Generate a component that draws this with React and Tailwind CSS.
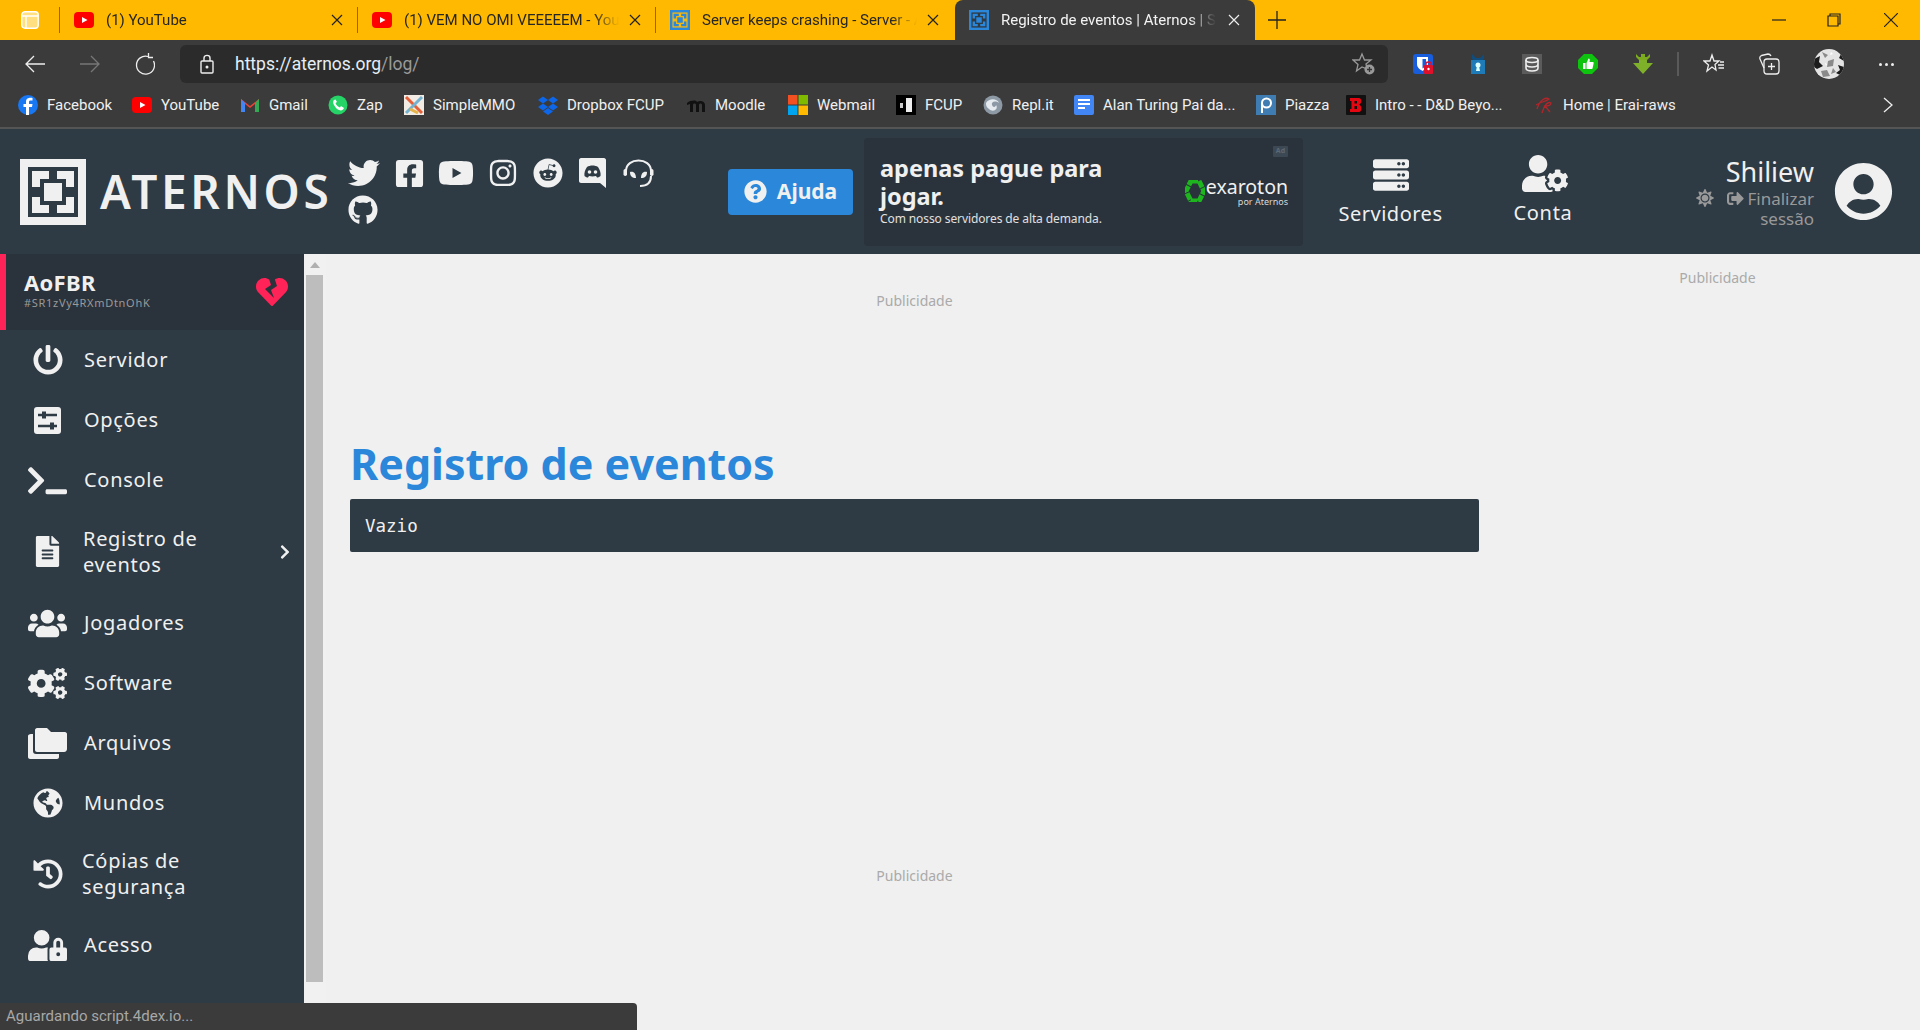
import React from "react";
import {
  FaTwitter, FaFacebookSquare, FaYoutube, FaInstagram, FaReddit, FaGithub, FaQuestionCircle,
  FaServer, FaUserCog, FaSun, FaSignOutAlt, FaUserCircle, FaHeartBroken, FaPowerOff, FaTerminal,
  FaFileAlt, FaChevronRight, FaUsers, FaCogs, FaGlobeAmericas, FaHistory, FaUserLock,
} from "react-icons/fa";

const ui = "font-['Roboto',sans-serif]";
const site = "font-['Noto_Sans',sans-serif]";

function AternosLogo({ size = 66, light = "#f0f0f0", dark = "#2e3a44" }) {
  return (
    <svg width={size} height={size} viewBox="0 0 66 66" className="shrink-0">
      <rect width="66" height="66" fill={light} />
      <rect x="8" y="8" width="50" height="50" fill={dark} />
      <rect x="24" y="24" width="18" height="18" fill={light} />
      <polygon points="12,12 29,12 29,20 20,20 20,28 12,28" fill={light} />
      <polygon points="54,12 37,12 37,20 46,20 46,28 54,28" fill={light} />
      <polygon points="12,54 29,54 29,46 20,46 20,38 12,38" fill={light} />
      <polygon points="54,54 37,54 37,46 46,46 46,38 54,38" fill={light} />
    </svg>
  );
}

function AFav() {
  return (
    <svg width="20" height="20" viewBox="0 0 66 66" className="shrink-0">
      <rect width="66" height="66" fill="#2b87da" />
      <rect x="8" y="8" width="50" height="50" fill="#f5b80e" />
      <rect x="24" y="24" width="18" height="18" fill="#2b87da" />
      <polygon points="12,12 29,12 29,20 20,20 20,28 12,28" fill="#2b87da" />
      <polygon points="54,12 37,12 37,20 46,20 46,28 54,28" fill="#2b87da" />
      <polygon points="12,54 29,54 29,46 20,46 20,38 12,38" fill="#2b87da" />
      <polygon points="54,54 37,54 37,46 46,46 46,38 54,38" fill="#2b87da" />
    </svg>
  );
}

function AFavDark() {
  return (
    <svg width="20" height="20" viewBox="0 0 66 66" className="shrink-0">
      <rect width="66" height="66" fill="#2b87da" />
      <rect x="8" y="8" width="50" height="50" fill="#2e3a44" />
      <rect x="24" y="24" width="18" height="18" fill="#2b87da" />
      <polygon points="12,12 29,12 29,20 20,20 20,28 12,28" fill="#2b87da" />
      <polygon points="54,12 37,12 37,20 46,20 46,28 54,28" fill="#2b87da" />
      <polygon points="12,54 29,54 29,46 20,46 20,38 12,38" fill="#2b87da" />
      <polygon points="54,54 37,54 37,46 46,46 46,38 54,38" fill="#2b87da" />
    </svg>
  );
}

function YtFav() {
  return (
    <svg width="20" height="20" viewBox="0 0 20 20" className="shrink-0">
      <rect y="2" width="20" height="16" rx="4" fill="#f00" />
      <polygon points="8,7 8,13 13.5,10" fill="#fff" />
    </svg>
  );
}

function X({ color = "#222" }) {
  return (
    <svg width="12" height="12" viewBox="0 0 12 12" className="shrink-0">
      <path d="M1 1L11 11M11 1L1 11" stroke={color} strokeWidth="1.2" />
    </svg>
  );
}

function Tab({ icon, text }) {
  return (
    <div className="flex h-full w-[299px] shrink-0 items-center pl-[14px] border-l border-[#8a6c10] -mr-px box-border">
      {icon}
      <span className="ml-[12px] w-[215px] overflow-hidden whitespace-nowrap text-[15px] text-[#262626] [mask-image:linear-gradient(to_right,black_88%,transparent)]">{text}</span>
      <span className="ml-[10px]"><X /></span>
    </div>
  );
}

function TabBar() {
  return (
    <div className={`flex h-[40px] shrink-0 bg-[#ffb900] ${ui}`}>
      <div className="flex w-[59px] shrink-0 items-center justify-center">
        <svg width="18" height="18" viewBox="0 0 18 18">
          <rect x="0.8" y="0.8" width="16.4" height="16.4" rx="3" fill="#ffdf80" stroke="#fff" strokeWidth="1.4" />
          <path d="M1 5H17M5 5V17" stroke="#fff" strokeWidth="1.4" />
        </svg>
      </div>
      <div className="flex h-full w-[896px] items-center py-[7px]">
        <Tab icon={<YtFav />} text="(1) YouTube" />
        <Tab icon={<YtFav />} text="(1) VEM NO OMI VEEEEEM - YouTube" />
        <Tab icon={<AFav />} text="Server keeps crashing - Server - Aternos" />
      </div>
      <div className="flex h-[45px] w-[300px] shrink-0 items-center rounded-t-lg bg-[#3b3b3b] pb-[5px] pl-[14px]">
        <AFavDark />
        <span className="ml-[12px] w-[215px] overflow-hidden whitespace-nowrap text-[15px] text-[#f2f2f2] [mask-image:linear-gradient(to_right,black_88%,transparent)]">Registro de eventos | Aternos | Server</span>
        <span className="ml-[12px]"><X color="#eee" /></span>
      </div>
      <div className="ml-[13px] flex items-center">
        <svg width="18" height="18" viewBox="0 0 18 18"><path d="M9 0V18M0 9H18" stroke="#222" strokeWidth="1.3" /></svg>
      </div>
      <div className="ml-auto flex items-center text-[#222]">
        <svg width="14" height="14" viewBox="0 0 14 14"><path d="M0 7H14" stroke="#222" strokeWidth="1.2" /></svg>
        <svg className="ml-[41px]" width="14" height="14" viewBox="0 0 14 14" fill="none"><path d="M3 3V1H13V11H11M1 3H11V13H1Z" stroke="#222" strokeWidth="1.2" /></svg>
        <svg className="ml-[43px] mr-[22px]" width="14" height="14" viewBox="0 0 14 14"><path d="M0 0L14 14M14 0L0 14" stroke="#222" strokeWidth="1.2" /></svg>
      </div>
    </div>
  );
}

function ExtIcons() {
  return (
    <div className="ml-[25px] flex items-center">
      <svg width="20" height="20" viewBox="0 0 20 20" className="mr-[35px]">
        <rect width="20" height="20" rx="3" fill="#175ddc" />
        <path d="M4 3H15V10C15 14 11 16 9.5 17C8 16 4 14 4 10Z" fill="#fff" />
        <path d="M9.5 5H13V10C13 12 11 13.5 9.5 14.5Z" fill="#175ddc" />
        <rect x="11" y="11" width="9" height="9" rx="1" fill="#e0102a" />
        <path d="M13 11V9.5C13 7.5 18 7.5 18 9.5V11" stroke="#e0102a" fill="none" strokeWidth="1.4" />
        <circle cx="15.5" cy="15" r="1.2" fill="#fff" />
      </svg>
      <svg width="20" height="20" viewBox="0 0 20 20" className="mr-[34px]">
        <path d="M4 0L8 4H12L16 0V5L14 7H6L4 5Z" fill="#0e4d7d" />
        <rect x="3" y="6" width="14" height="14" fill="#1f7ab8" />
        <circle cx="10" cy="11" r="2.5" fill="#dff" />
        <path d="M9 12H11L12 17H8Z" fill="#dff" />
      </svg>
      <svg width="20" height="20" viewBox="0 0 20 20" className="mr-[36px]">
        <rect width="20" height="20" fill="#5b5b5b" />
        <g fill="none" stroke="#eee" strokeWidth="1.6">
          <ellipse cx="10" cy="6" rx="6" ry="2.5" />
          <path d="M4 6V14C4 16 7 17 10 17S16 16 16 14V6M4 10C4 12 7 13 10 13S16 12 16 10" />
        </g>
      </svg>
      <svg width="20" height="20" viewBox="0 0 20 20" className="mr-[35px]">
        <polygon points="6,0 14,0 20,6 20,14 14,20 6,20 0,14 0,6" fill="#0fc40f" />
        <path d="M5 9H7.5V15H5ZM8.5 9L10.5 4.5C12 4.5 12 6 11.5 8H15C15.8 8 15.8 9 15.5 10L14.5 14.5C14.3 15 14 15 13.5 15H8.5Z" fill="#fff" />
      </svg>
      <svg width="20" height="20" viewBox="0 0 20 20" className="mr-[24px]">
        <path d="M3 0L6 3H8V0H12V3H14L17 0V3L14 6H6L3 3Z" fill="#7cab20" />
        <path d="M6 6H14V9H20L10 20L0 9H6Z" fill="#7fb02a" />
      </svg>
      <div className="mr-[24px] h-[24px] w-[2px] bg-[#5a5a5a]" />
      <svg width="22" height="22" viewBox="0 0 22 22" fill="none" stroke="#eee" strokeWidth="1.3" className="mr-[33px]">
        <path d="M9 2L11 8H16L12 11.5L13 17L9 14L4 18L5.5 12L1 8H7Z" />
        <path d="M15 12H21M15.5 15H21M17 9H21" />
      </svg>
      <svg width="22" height="22" viewBox="0 0 22 22" fill="none" stroke="#eee" strokeWidth="1.3" className="mr-[34px]">
        <rect x="6" y="6" width="15" height="15" rx="3" />
        <path d="M13.5 10V17M10 13.5H17M6 15L2 6C1.5 4.5 2 3 3.5 2.5L10 1C11.5 1 12.5 2 13 3" />
      </svg>
      <svg width="30" height="30" viewBox="0 0 30 30" className="mr-[35px] shrink-0">
        <defs><clipPath id="av"><circle cx="15" cy="15" r="15" /></clipPath></defs>
        <g clipPath="url(#av)">
          <rect width="30" height="30" fill="#e4e4e4" />
          <path d="M20 0H30V12L25 9L27 5ZM0 10L6 7L5 13L9 17L3 20L0 18ZM24 16L30 18V28L22 24L26 21Z" fill="#1c1c1c" />
          <path d="M8 3L14 6L11 9ZM14 12L20 10L19 17L13 18ZM7 22L13 21L16 27L9 28ZM19 19L22 23L17 25Z" fill="#8a8a8a" />
          <path d="M11 14L13 15L12 17ZM3 24L6 26L4 28ZM17 3L19 5L16 6Z" fill="#fff" />
        </g>
      </svg>
      <div className="flex gap-[3px]">
        <span className="h-[3px] w-[3px] rounded-full bg-[#eee]" />
        <span className="h-[3px] w-[3px] rounded-full bg-[#eee]" />
        <span className="h-[3px] w-[3px] rounded-full bg-[#eee]" />
      </div>
    </div>
  );
}

function Toolbar() {
  return (
    <div className={`flex h-[43px] shrink-0 items-center bg-[#3b3b3b] pt-[5px] ${ui}`}>
      <svg className="ml-[25px]" width="20" height="18" viewBox="0 0 20 18" fill="none" stroke="#eee" strokeWidth="1.3"><path d="M20 9H1M9 1L1 9L9 17" /></svg>
      <svg className="ml-[35px]" width="20" height="18" viewBox="0 0 20 18" fill="none" stroke="#777" strokeWidth="1.3"><path d="M0 9H19M11 1L19 9L11 17" /></svg>
      <svg className="ml-[35px]" width="20" height="22" viewBox="0 0 20 22" fill="none" stroke="#eee" strokeWidth="1.3"><path d="M13 3.5A9 9 0 1 0 18.5 8M13.5 0V4.5H18" /></svg>
      <div className="ml-[25px] flex h-[38px] w-[1208px] shrink-0 items-center rounded-md bg-[#2b2b2b]">
        <svg className="ml-[20px]" width="14" height="20" viewBox="0 0 14 20" fill="none" stroke="#eee" strokeWidth="1.4"><rect x="1" y="7" width="12" height="12" rx="1" /><path d="M4 7V4C4 0.5 10 0.5 10 4V7" /><circle cx="7" cy="13" r="0.8" fill="#eee" /></svg>
        <span className="ml-[21px] text-[17.5px] text-[#e6eef5]">https://aternos.org<span className="text-[#9a9a9a]">/log/</span></span>
        <svg className="ml-auto mr-[12px]" width="24" height="24" viewBox="0 0 24 24" fill="none" stroke="#999" strokeWidth="1.3">
          <path d="M10 2L12.5 8H19L14 12L15 17L10 15L4.5 19L6 12.5L1 8H7.5Z" />
          <circle cx="17.5" cy="17.5" r="5" fill="#999" stroke="none" />
          <path d="M17.5 15V20M15 17.5H20" stroke="#333" strokeWidth="1.3" />
        </svg>
      </div>
      <ExtIcons />
    </div>
  );
}

const Sq = ({ children }) => (
  <svg width="20" height="20" viewBox="0 0 20 20" className="shrink-0">{children}</svg>
);

const bookmarks = [
  { w: "w-[114px]", t: "Facebook", i: <Sq><circle cx="10" cy="10" r="10" fill="#1877f2" /><path d="M11 20V12H14L14.5 9H11V7C11 6 11.5 5.5 12.5 5.5H14.5V3C13 2.8 8 2 8 7V9H5.5V12H8V20Z" fill="#fff" /></Sq> },
  { w: "w-[108px]", t: "YouTube", i: <YtFav /> },
  { w: "w-[88px]", t: "Gmail", i: <Sq><path d="M1 4L10 11L19 4V17H15V9L10 13L5 9V17H1Z" fill="#ea4335" /><path d="M1 4V17H5V8Z" fill="#4285f4" /><path d="M19 4V17H15V8Z" fill="#34a853" /></Sq> },
  { w: "w-[76px]", t: "Zap", i: <Sq><circle cx="10" cy="10" r="9.5" fill="#25d366" /><path d="M6 5C4 7 6 11 9 14C12 16 15 16 16 13L13 11L12 12.5C10 12 8 10 7.5 8L9 7L7.5 4.5Z" fill="#fff" /></Sq> },
  { w: "w-[134px]", t: "SimpleMMO", i: <Sq><rect width="20" height="20" fill="#f2ece4" /><path d="M2 2L18 18" stroke="#e3603a" strokeWidth="3" /><path d="M18 2L2 18" stroke="#75b2d0" strokeWidth="3" /><path d="M6 14L14 18" stroke="#e6b34a" strokeWidth="3" /></Sq> },
  { w: "w-[148px]", t: "Dropbox FCUP", i: <Sq><path d="M5 1.5L10 5L5 8.5L0 5ZM15 1.5L20 5L15 8.5L10 5ZM5 8.5L10 12L5 15.5L0 12ZM15 8.5L20 12L15 15.5L10 12ZM5 16.5L10 13L15 16.5L10 20Z" fill="#0e66e8" /></Sq> },
  { w: "w-[102px]", t: "Moodle", i: <Sq><path d="M1 8C5 5 10 5 11 7C14 5 19 6 19 10V17H16V10C16 8 13 8 13 10V17H10V10C10 8 7 8 7 10V17H4V9L1 10Z" fill="#111" /></Sq> },
  { w: "w-[108px]", t: "Webmail", i: <Sq><rect width="9.5" height="9.5" fill="#f25022" /><rect x="10.5" width="9.5" height="9.5" fill="#7fba00" /><rect y="10.5" width="9.5" height="9.5" fill="#00a4ef" /><rect x="10.5" y="10.5" width="9.5" height="9.5" fill="#ffb900" /></Sq> },
  { w: "w-[87px]", t: "FCUP", i: <Sq><rect width="20" height="20" fill="#000" /><rect x="10" y="3" width="6" height="14" fill="#eee" /><rect x="4" y="8" width="3" height="5" fill="#ccc" /></Sq> },
  { w: "w-[91px]", t: "Repl.it", i: <Sq><circle cx="10" cy="10" r="9.5" fill="#8d9aa6" /><path d="M3 8C6 3 14 3 16 8C12 5 8 7 9 10C10 13 13 12 13 10C16 14 10 18 6 14C3 12 3 10 3 8Z" fill="#e5ebef" /></Sq> },
  { w: "w-[182px]", t: "Alan Turing Pai da...", i: <Sq><rect width="20" height="20" rx="2" fill="#4285f4" /><path d="M4 5H16M4 9H16M4 13H11" stroke="#fff" strokeWidth="2" /></Sq> },
  { w: "w-[90px]", t: "Piazza", i: <Sq><rect width="20" height="20" fill="#3e7cb1" /><circle cx="10.5" cy="8" r="4.5" fill="none" stroke="#fff" strokeWidth="2" /><path d="M6 8V18" stroke="#fff" strokeWidth="2" /></Sq> },
  { w: "w-[188px]", t: "Intro - - D&D Beyo...", i: <Sq><rect width="20" height="20" rx="1" fill="#111" /><path d="M4 3H13C16 3 16 9 13 9.5C16 10 16 17 13 17H4V14H5.5V6H4ZM8.5 6V8.5H11V6ZM8.5 11V14H11V11Z" fill="#e40712" /></Sq> },
  { w: "w-[200px]", t: "Home | Erai-raws", i: <Sq><path d="M3 14C6 4 12 2 15 4C13 6 6 7 2 10M8 18C10 10 14 6 17 8C17 11 13 11 11 11L16 17" fill="none" stroke="#b2262b" strokeWidth="1.3" /></Sq> },
];

function Bookmarks() {
  return (
    <div className={`flex h-[46px] shrink-0 items-center border-b-2 border-[#555] bg-[#3b3b3b] pl-[18px] ${ui}`}>
      {bookmarks.map((b) => (
        <div key={b.t} className={`flex shrink-0 items-center gap-[9px] ${b.w}`}>
          {b.i}
          <span className="whitespace-nowrap text-[15px] text-[#f0f0f0]">{b.t}</span>
        </div>
      ))}
      <svg className="ml-[149px]" width="10" height="16" viewBox="0 0 10 16" fill="none" stroke="#eee" strokeWidth="1.3"><path d="M1 1L9 8L1 15" /></svg>
    </div>
  );
}

function Discord() {
  return (
    <svg width="27" height="30" viewBox="0 0 27 30">
      <path d="M2 0H25C26 0 27 1 27 2V30L21 25H2C1 25 0 24 0 23V2C0 1 1 0 2 0Z" fill="#f0f0f0" />
      <path d="M8 9C11 7 16 7 19 9C21 12 22 15 21.5 18C20 19 19 19.5 18 19.5L17 18C14.5 18.5 12.5 18.5 10 18L9 19.5C8 19.5 7 19 5.5 18C5 15 6 12 8 9Z" fill="#2e3a44" />
      <circle cx="10.5" cy="14" r="1.8" fill="#f0f0f0" />
      <circle cx="16.5" cy="14" r="1.8" fill="#f0f0f0" />
    </svg>
  );
}

function Headset() {
  return (
    <svg width="31" height="30" viewBox="0 0 31 30" fill="none">
      <path d="M3 13C3 -1 28 -1 28 13" stroke="#f0f0f0" strokeWidth="2" />
      <rect x="0.5" y="11" width="3.5" height="7" rx="1.7" fill="#f0f0f0" />
      <rect x="27" y="11" width="3.5" height="7" rx="1.7" fill="#f0f0f0" />
      <path d="M7 14C11 13 13 16 13 20C9 20 7 18 7 14ZM24 14C20 13 18 16 18 20C22 20 24 18 24 14Z" fill="#f0f0f0" />
      <path d="M28 18C28 25 24 28 17 28" stroke="#f0f0f0" strokeWidth="2" />
    </svg>
  );
}

function Socials() {
  return (
    <div className="ml-[18px] flex w-[320px] shrink-0 flex-col gap-[4px] self-start pt-[26px] text-[#f0f0f0]">
      <div className="flex items-center">
        <FaTwitter className="text-[32px]" />
        <FaFacebookSquare className="ml-[14px] text-[31px]" />
        <FaYoutube className="ml-[13px] text-[36px]" />
        <FaInstagram className="ml-[14px] text-[30px]" />
        <FaReddit className="ml-[15px] text-[30px]" />
        <span className="ml-[16px]"><Discord /></span>
        <span className="ml-[17px]"><Headset /></span>
      </div>
      <FaGithub className="text-[30px]" />
    </div>
  );
}

function Ad() {
  return (
    <div className="ml-[11px] flex h-[108px] w-[439px] shrink-0 items-center rounded-sm bg-[#2a333c] pl-[16px] pr-[15px]">
      <div className="-mt-[2px] w-[250px]">
        <div className="text-[23.5px] font-bold leading-[28px] text-[#f0f0f0]">apenas pague para jogar.</div>
        <div className="whitespace-nowrap text-[12px] leading-[17px] tracking-[-0.1px] text-[#e0e0e0]">Com nosso servidores de alta demanda.</div>
      </div>
      <div className="ml-auto flex h-full flex-col items-end pt-[8px]">
        <span className="flex h-[11px] w-[15px] items-center justify-center rounded-[1px] bg-[#3c4854] text-[7px] font-bold text-[#5d6975]">Ad</span>
        <div className="mt-[20px] flex items-center">
          <svg width="20" height="22" viewBox="0 0 20 22" className="mr-[1px]">
            <polygon points="6,1 14,1 19,11 14,21 6,21 1,11" fill="none" stroke="#1eb61e" strokeWidth="5" strokeDasharray="7 1" />
          </svg>
          <div className="flex flex-col items-end">
            <span className="text-[19.5px] leading-[20px] text-[#f0f0f0]">exaroton</span>
            <span className="text-[9px] leading-[9px] text-[#d8d8d8]">por Aternos</span>
          </div>
        </div>
      </div>
    </div>
  );
}

function Header() {
  return (
    <div className={`flex h-[125px] shrink-0 items-center bg-[#2e3a44] pl-[20px] ${site}`}>
      <AternosLogo />
      <span className="ml-[14px] -mt-[2px] w-[230px] shrink-0 whitespace-nowrap text-[46px] font-semibold leading-none tracking-[3.6px] text-[#f0f0f0]">ATERNOS</span>
      <Socials />
      <div className="ml-[60px] flex h-[46px] w-[125px] shrink-0 items-center justify-center gap-[10px] rounded-sm bg-[#2b87da] text-[21px] font-bold text-[#f0f0f0]">
        <FaQuestionCircle className="text-[23px]" />
        Ajuda
      </div>
      <Ad />
      <div className="ml-[35px] -mt-[3px] flex w-[105px] shrink-0 flex-col items-center text-[#f0f0f0]">
        <FaServer className="mt-[4px] text-[36px]" />
        <span className="mt-[7px] whitespace-nowrap text-[20px] leading-[28px] tracking-[0.5px]">Servidores</span>
      </div>
      <div className="ml-[71px] -mt-[3px] flex w-[58px] shrink-0 flex-col items-center text-[#f0f0f0]">
        <FaUserCog className="h-[39px] w-[46px] translate-x-[2px]" />
        <span className="mt-[6px] text-[20px] leading-[28px] tracking-[0.7px]">Conta</span>
      </div>
      <div className="ml-[124px] flex w-[118px] shrink-0 flex-col items-end">
        <span className="text-[27px] leading-[33px] text-[#f0f0f0]">Shiliew</span>
        <div className="flex w-full items-center justify-end text-[#999]">
          <FaSun className="mr-[auto] text-[18px]" />
          <FaSignOutAlt className="mr-[3px] text-[17px]" />
          <span className="text-[17px] leading-[21px]">Finalizar</span>
        </div>
        <span className="text-[17px] leading-[20px] text-[#999]">sessão</span>
      </div>
      <FaUserCircle className="ml-[20px] shrink-0 text-[59px] text-[#f0f0f0]" />
    </div>
  );
}

const FolderIcon = () => (
  <svg width="39" height="31" viewBox="0 0 39 31" fill="#f0f0f0">
    <path d="M7 2C7 1 8 0 9 0H19L23 4H37C38 4 39 5 39 6V21C39 22 38 24 36 24H9C8 24 7 23 7 22Z" />
    <path d="M0 8C0 7 1 6 3 6H5V23C5 25 6 26 8 26H31V29C31 30 30 31 29 31H2C1 31 0 30 0 29Z" />
  </svg>
);

const SlidersIcon = () => (
  <svg width="27" height="27" viewBox="0 0 27 27">
    <rect width="27" height="27" rx="3" fill="#f0f0f0" />
    <path d="M4 8H23M4 19H23" stroke="#2e3a44" strokeWidth="2.5" />
    <rect x="8" y="4.5" width="4" height="7" fill="#2e3a44" />
    <rect x="16" y="15.5" width="4" height="7" fill="#2e3a44" />
  </svg>
);

const nav = [
  { t: ["Servidor"], i: <FaPowerOff className="text-[30px]" />, h: "h-[60px]" },
  { t: ["Opções"], i: <SlidersIcon />, h: "h-[60px]" },
  { t: ["Console"], i: <FaTerminal className="text-[39px]" />, h: "h-[60px]" },
  { t: ["Registro de", "eventos"], i: <FaFileAlt className="text-[31px]" />, h: "h-[83px]", arrow: true, x: "ml-[16px]" },
  { t: ["Jogadores"], i: <FaUsers className="text-[39px]" />, h: "h-[60px]" },
  { t: ["Software"], i: <FaCogs className="text-[39px]" />, h: "h-[60px]" },
  { t: ["Arquivos"], i: <FolderIcon />, h: "h-[60px]" },
  { t: ["Mundos"], i: <FaGlobeAmericas className="text-[30px]" />, h: "h-[60px]" },
  { t: ["Cópias de", "segurança"], i: <FaHistory className="text-[30px]" />, h: "h-[82px]", x: "ml-[15px]" },
  { t: ["Acesso"], i: <FaUserLock className="text-[39px]" />, h: "h-[60px]" },
];

function Sidebar() {
  return (
    <div className={`flex w-[304px] shrink-0 flex-col bg-[#2e3a44] ${site}`}>
      <div className="flex h-[76px] shrink-0 items-center border-l-[6px] border-[#ff2358] bg-[#2a323b] pl-[18px] pr-[16px]">
        <div className="-mt-[6px]">
          <div className="text-[22px] font-bold leading-[26px] tracking-[0.3px] text-[#f0f0f0]">AoFBR</div>
          <div className="text-[11px] leading-[15px] tracking-[0.7px] text-[#9a9a9a]">#SR1zVy4RXmDtnOhK</div>
        </div>
        <FaHeartBroken className="ml-auto text-[32px] text-[#ff2358]" />
      </div>
      {nav.map((n) => (
        <div key={n.t[0]} className={`flex shrink-0 items-center ${n.h}`}>
          <div className="ml-[28px] flex w-[39px] shrink-0 items-center justify-center text-[#f0f0f0]">{n.i}</div>
          <div className={`text-[20px] leading-[26px] tracking-[0.7px] text-[#f0f0f0] ${n.x || "ml-[17px]"}`}>
            {n.t.map((l) => <div key={l}>{l}</div>)}
          </div>
          {n.arrow && <FaChevronRight className="ml-auto mr-[11px] text-[16px] text-[#f0f0f0]" />}
        </div>
      ))}
    </div>
  );
}

function Scrollbar() {
  return (
    <div className="flex w-[22px] shrink-0 flex-col items-center bg-[#f1f1f1] pl-[2px] pr-[3px] pt-[8px]">
      <div className="h-0 w-0 border-x-[5px] border-b-[6px] border-x-transparent border-b-[#b0b0b0]" />
      <div className="mt-[7px] h-[707px] w-full bg-[#bdbdbd]" />
    </div>
  );
}

function Main() {
  return (
    <div className={`flex min-w-0 flex-1 bg-[#f0f0f0] ${site}`}>
      <Scrollbar />
      <div className="ml-[24px] w-[1129px] shrink-0">
        <div className="mt-[37px] text-center text-[14px] leading-[20px] text-[#aaa]">Publicidade</div>
        <h1 className="mt-[129px] whitespace-nowrap text-[43px] font-bold leading-[48px] text-[#2b87da]">Registro de eventos</h1>
        <div className="mt-[11px] flex h-[53px] items-center rounded-[2px] bg-[#2e3a44] pl-[15px] pt-[2px] font-['DejaVu_Sans_Mono',monospace] text-[17.5px] text-[#f0f0f0]">Vazio</div>
        <div className="mt-[314px] text-center text-[14px] leading-[20px] text-[#aaa]">Publicidade</div>
      </div>
      <div className="flex-1 pl-[36px] pt-[14px] text-center text-[14px] leading-[20px] text-[#aaa]">Publicidade</div>
    </div>
  );
}

export default function App() {
  return (
    <div className="relative flex h-[1030px] w-[1920px] flex-col overflow-hidden bg-[#f0f0f0]">
      <TabBar />
      <Toolbar />
      <Bookmarks />
      <Header />
      <div className="flex min-h-0 flex-1">
        <Sidebar />
        <Main />
      </div>
      <div className={`absolute bottom-0 left-0 flex h-[27px] w-[637px] items-center rounded-tr-sm bg-[#3b3b3b] pl-[6px] text-[15px] text-[#a8a8a8] ${ui}`}>Aguardando script.4dex.io...</div>
    </div>
  );
}
